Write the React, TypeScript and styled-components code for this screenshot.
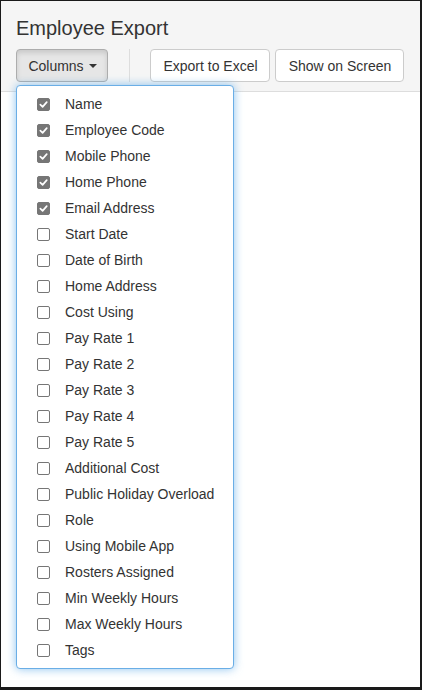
import styled, { createGlobalStyle } from "styled-components";

const columns: { label: string; checked: boolean }[] = [
    { label: "Name", checked: true },
    { label: "Employee Code", checked: true },
    { label: "Mobile Phone", checked: true },
    { label: "Home Phone", checked: true },
    { label: "Email Address", checked: true },
    { label: "Start Date", checked: false },
    { label: "Date of Birth", checked: false },
    { label: "Home Address", checked: false },
    { label: "Cost Using", checked: false },
    { label: "Pay Rate 1", checked: false },
    { label: "Pay Rate 2", checked: false },
    { label: "Pay Rate 3", checked: false },
    { label: "Pay Rate 4", checked: false },
    { label: "Pay Rate 5", checked: false },
    { label: "Additional Cost", checked: false },
    { label: "Public Holiday Overload", checked: false },
    { label: "Role", checked: false },
    { label: "Using Mobile App", checked: false },
    { label: "Rosters Assigned", checked: false },
    { label: "Min Weekly Hours", checked: false },
    { label: "Max Weekly Hours", checked: false },
    { label: "Tags", checked: false },
];

function App() {
    return (
        <>
            <GlobalStyle />
            <Frame>
                <Header>
                    <Title>Employee Export</Title>
                    <Toolbar>
                        <DropdownWrap>
                            <Button $active $width={92}>
                                Columns <Caret />
                            </Button>
                            <Menu>
                                {columns.map((c) => (
                                    <MenuItem key={c.label}>
                                        <Check $checked={c.checked}>
                                            {c.checked && (
                                                <svg width="9" height="9" viewBox="0 0 10 10">
                                                    <path
                                                        d="M1.5 5.2 L4 7.6 L8.6 2.4"
                                                        fill="none"
                                                        stroke="#fff"
                                                        strokeWidth="1.9"
                                                        strokeLinecap="round"
                                                        strokeLinejoin="round"
                                                    />
                                                </svg>
                                            )}
                                        </Check>
                                        {c.label}
                                    </MenuItem>
                                ))}
                            </Menu>
                        </DropdownWrap>
                        <Divider />
                        <ButtonGroup>
                            <Button $width={120}>Export to Excel</Button>
                            <Button $width={129}>Show on Screen</Button>
                        </ButtonGroup>
                    </Toolbar>
                </Header>
            </Frame>
        </>
    );
}

const GlobalStyle = createGlobalStyle`
    html, body {
        margin: 0;
        padding: 0;
        background: #fff;
    }

    body {
        font-family: "Liberation Sans", Arial, sans-serif;
        color: #333;
    }
`;

const Frame = styled.div`
    width: 422px;
    height: 690px;
    box-sizing: border-box;
    border-style: solid;
    border-color: #1a1a1a;
    border-width: 1px 2px 3px 1px;
    background: #fff;
    overflow: hidden;
`;

const Header = styled.div`
    background: #f5f5f5;
    border-bottom: 1px solid #ddd;
    height: 91px;
    box-sizing: border-box;
    padding: 16px 0 0 15px;
`;

const Title = styled.div`
    font-size: 20px;
    line-height: 22px;
    color: #333;
`;

const Toolbar = styled.div`
    display: flex;
    align-items: stretch;
    margin-top: 10px;
    height: 33px;
`;

const DropdownWrap = styled.div`
    position: relative;
`;

const Button = styled.button<{ $active?: boolean; $width: number }>`
    width: ${(p) => p.$width}px;
    height: 33px;
    box-sizing: border-box;
    padding: 0 0 0 1px;
    font-family: inherit;
    font-size: 14px;
    color: #333;
    border-radius: 4px;
    border: 1px solid ${(p) => (p.$active ? "#adadad" : "#ccc")};
    background: ${(p) => (p.$active ? "#e6e6e6" : "#fff")};
    box-shadow: ${(p) => (p.$active ? "inset 0 3px 5px rgba(0, 0, 0, 0.125)" : "none")};
    display: flex;
    align-items: center;
    justify-content: center;
    gap: 4px;
    cursor: pointer;
`;

const Caret = styled.span`
    display: inline-block;
    width: 0;
    height: 0;
    border-top: 4px solid #333;
    border-left: 4px solid transparent;
    border-right: 4px solid transparent;
    margin-left: 1px;
`;

const Divider = styled.div`
    width: 1px;
    background: #ddd;
    margin: 0 20px 0 21px;
`;

const ButtonGroup = styled.div`
    display: flex;
    gap: 5px;
`;

const Menu = styled.div`
    position: absolute;
    top: 36px;
    left: 0;
    width: 218px;
    box-sizing: border-box;
    padding: 5px 0;
    background: #fff;
    border: 1px solid #6aaee6;
    border-radius: 4px;
    box-shadow: 0 0 10px rgba(102, 175, 233, 0.75);
    z-index: 10;
`;

const MenuItem = styled.div`
    display: flex;
    align-items: center;
    height: 26px;
    padding-left: 20px;
    font-size: 14px;
    color: #333;
`;

const Check = styled.span<{ $checked: boolean }>`
    width: 13px;
    height: 13px;
    box-sizing: border-box;
    border-radius: 2px;
    margin-right: 15px;
    display: flex;
    align-items: center;
    justify-content: center;
    background: ${(p) => (p.$checked ? "#767676" : "#fff")};
    border: 1px solid #767676;
`;

export default App;
